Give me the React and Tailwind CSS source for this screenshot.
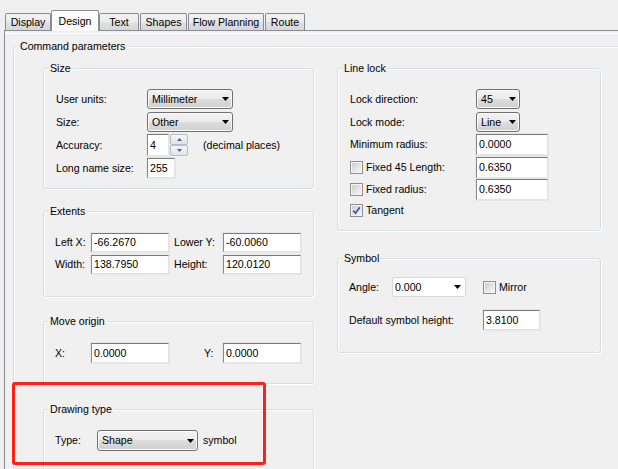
import React from 'react';

function Arrow() {
  return (
    <svg width="7" height="4" viewBox="0 0 7 4" className="shrink-0">
      <path d="M0 0H7L3.5 4Z" fill="#000" />
    </svg>
  );
}

function Tab({ children, w, active }) {
  if (active) {
    return (
      <div className={`relative z-10 -mb-px flex h-[21px] items-center justify-center rounded-t-[2px] border border-b-0 border-[#898c95] bg-[#fcfcfc] ${w}`}>
        {children}
      </div>
    );
  }
  return (
    <div className={`flex h-[17px] items-center justify-center rounded-t-[2px] border border-b-0 border-[#898c95] bg-[linear-gradient(#f3f3f3,#ebebeb_50%,#e0e0e0_55%,#d6d6d6)] pt-[1px] ${w}`}>
      {children}
    </div>
  );
}

function Group({ label, className, children }) {
  return (
    <div className={`relative rounded-[3px] border border-[#d5dfe5] shadow-[inset_1px_1px_0_#fff,1px_1px_0_#fff] ${className}`}>
      <span className="absolute -top-[7px] left-[4px] bg-[#f0f0f0] px-[2px] leading-[13px]">{label}</span>
      {children}
    </div>
  );
}

function Combo({ value, className }) {
  return (
    <div className={`flex items-center justify-between rounded-[3px] border border-[#707070] bg-[linear-gradient(#f2f2f2,#ebebeb_50%,#dddddd_50%,#cfcfcf)] pl-[4px] pr-[3px] shadow-[inset_0_0_0_1px_#fbfbfb] ${className}`}>
      <span>{value}</span>
      <Arrow />
    </div>
  );
}

function Field({ value, className }) {
  return (
    <div className={`flex items-center border border-b-[#e3e3e3] border-l-[#8a8a8a] border-r-[#e3e3e3] border-t-[#7a7a7a] bg-white pl-[2px] shadow-[0_0_0_1px_#e6e6e6] ${className}`}>
      {value}
    </div>
  );
}

function Check({ checked }) {
  return (
    <div className="flex h-[13px] w-[13px] shrink-0 items-center justify-center border border-[#8f8f8f] bg-[#f4f4f4] p-[1px]">
      <div className="flex h-full w-full items-center justify-center bg-[linear-gradient(135deg,#cfcfcf,#f6f6f6)]">
        {checked && (
          <svg width="9" height="9" viewBox="0 0 9 9">
            <path d="M1.3 4.6L3.6 7.2L7.8 1.2" fill="none" stroke="#3f569c" strokeWidth="1.7" />
          </svg>
        )}
      </div>
    </div>
  );
}

function SpinBtn({ up }) {
  return (
    <div className="flex h-[11px] w-[18px] items-center justify-center rounded-[2px] border border-[#b5bdc9] bg-[linear-gradient(#f4f6f9,#dfe4ec)]">
      <svg width="5" height="3" viewBox="0 0 5 3">
        <path d={up ? 'M0 3H5L2.5 0Z' : 'M0 0H5L2.5 3Z'} fill="#4d6185" />
      </svg>
    </div>
  );
}

function Row({ label, lw, className = '', children }) {
  return (
    <div className={`flex items-center ${className}`}>
      <div className={`shrink-0 ${lw}`}>{label}</div>
      {children}
    </div>
  );
}

export default function App() {
  return (
    <div className="relative h-[469px] w-[618px] overflow-hidden bg-[#f0f0f0] font-['Liberation_Sans',Arial,sans-serif] text-[10.6px] leading-[13px] text-black">
      {/* Tabs */}
      <div className="mt-[10px] flex h-[20px] items-end pl-[5px]">
        <Tab w="w-[46px]">Display</Tab>
        <Tab w="w-[48px]" active>Design</Tab>
        <Tab w="w-[40px]">Text</Tab>
        <Tab w="ml-[1px] w-[47px]">Shapes</Tab>
        <Tab w="ml-[1px] w-[76px]">Flow Planning</Tab>
        <Tab w="ml-[1px] w-[40px]">Route</Tab>
      </div>

      {/* Panel */}
      <div className="ml-[4px] border-l border-t border-[#898c95]">
        <div className="mt-[2px] h-[1px] bg-white" />
        <Group label="Command parameters" className="ml-[8px] mt-[12px] h-[480px] w-[640px] pl-[29px] pt-[21px]">
          <div className="flex gap-[23px]">
            {/* Left column */}
            <div className="flex w-[271px] shrink-0 flex-col">
              <Group label="Size" className="h-[121px] pl-[12px] pt-[20px]">
                <Row label="User units:" lw="w-[91px]">
                  <Combo value="Millimeter" className="h-[20px] w-[86px]" />
                </Row>
                <Row label="Size:" lw="w-[91px]" className="mt-[3px]">
                  <Combo value="Other" className="h-[20px] w-[86px]" />
                </Row>
                <Row label="Accuracy:" lw="w-[91px]" className="mt-[2px]">
                  <Field value="4" className="h-[22px] w-[22px]" />
                  <div className="ml-px flex flex-col">
                    <SpinBtn up />
                    <SpinBtn />
                  </div>
                  <span className="ml-[15px]">(decimal places)</span>
                </Row>
                <Row label="Long name size:" lw="w-[91px]" className="mt-[2px]">
                  <Field value="255" className="h-[20px] w-[28px]" />
                </Row>
              </Group>

              <Group label="Extents" className="mt-[22px] h-[86px] pl-[11px] pt-[21px]">
                <Row label="Left X:" lw="w-[36px]">
                  <Field value="-66.2670" className="h-[19px] w-[78px]" />
                  <div className="ml-[5px] w-[49px]">Lower Y:</div>
                  <Field value="-60.0060" className="h-[19px] w-[78px]" />
                </Row>
                <Row label="Width:" lw="w-[36px]" className="mt-[3px]">
                  <Field value="138.7950" className="h-[19px] w-[78px]" />
                  <div className="ml-[5px] w-[49px]">Height:</div>
                  <Field value="120.0120" className="h-[19px] w-[78px]" />
                </Row>
              </Group>

              <Group label="Move origin" className="mt-[24px] h-[63px] pl-[11px] pt-[21px]">
                <Row label="X:" lw="w-[36px]">
                  <Field value="0.0000" className="h-[20px] w-[78px]" />
                  <div className="ml-[35px] w-[19px]">Y:</div>
                  <Field value="0.0000" className="h-[20px] w-[78px]" />
                </Row>
              </Group>

              <Group label="Drawing type" className="mt-[25px] h-[80px] pl-[11px] pt-[20px]">
                <Row label="Type:" lw="w-[42px]">
                  <Combo value="Shape" className="h-[21px] w-[101px]" />
                  <span className="ml-[5px]">symbol</span>
                </Row>
              </Group>
            </div>

            {/* Right column */}
            <div className="flex w-[264px] shrink-0 flex-col">
              <Group label="Line lock" className="h-[163px] pl-[12px] pt-[20px]">
                <Row label="Lock direction:" lw="w-[126px]">
                  <Combo value="45" className="h-[20px] w-[44px]" />
                </Row>
                <Row label="Lock mode:" lw="w-[126px]" className="mt-[3px]">
                  <Combo value="Line" className="h-[20px] w-[44px]" />
                </Row>
                <Row label="Minimum radius:" lw="w-[126px]" className="mt-[2px]">
                  <Field value="0.0000" className="h-[21px] w-[72px]" />
                </Row>
                <Row
                  label={<div className="flex items-center gap-[3px]"><Check /><span>Fixed 45 Length:</span></div>}
                  lw="w-[126px]"
                  className="mt-[2px]"
                >
                  <Field value="0.6350" className="h-[21px] w-[72px]" />
                </Row>
                <Row
                  label={<div className="flex items-center gap-[3px]"><Check /><span>Fixed radius:</span></div>}
                  lw="w-[126px]"
                  className="mt-[1px]"
                >
                  <Field value="0.6350" className="h-[21px] w-[72px]" />
                </Row>
                <div className="mt-[4px] flex h-[13px] items-center gap-[3px]">
                  <Check checked />
                  <span>Tangent</span>
                </div>
              </Group>

              <Group label="Symbol" className="mt-[27px] h-[95px] pl-[11px] pt-[18px]">
                <Row label="Angle:" lw="w-[43px]">
                  <div className="flex h-[20px] w-[74px] items-center justify-between rounded-[2px] border border-[#d9d9d9] bg-white pl-[2px] pr-[4px]">
                    <span>0.000</span>
                    <Arrow />
                  </div>
                  <div className="ml-[17px] flex items-center gap-[3px]">
                    <Check />
                    <span>Mirror</span>
                  </div>
                </Row>
                <Row label="Default symbol height:" lw="w-[134px]" className="mt-[13px]">
                  <Field value="3.8100" className="h-[20px] w-[57px]" />
                </Row>
              </Group>
            </div>
          </div>
        </Group>
      </div>

      {/* Annotation highlight */}
      <div className="absolute left-[12px] top-[382px] h-[83px] w-[254px] rounded-[3px] border-[3px] border-[#fe2019]" />
    </div>
  );
}
